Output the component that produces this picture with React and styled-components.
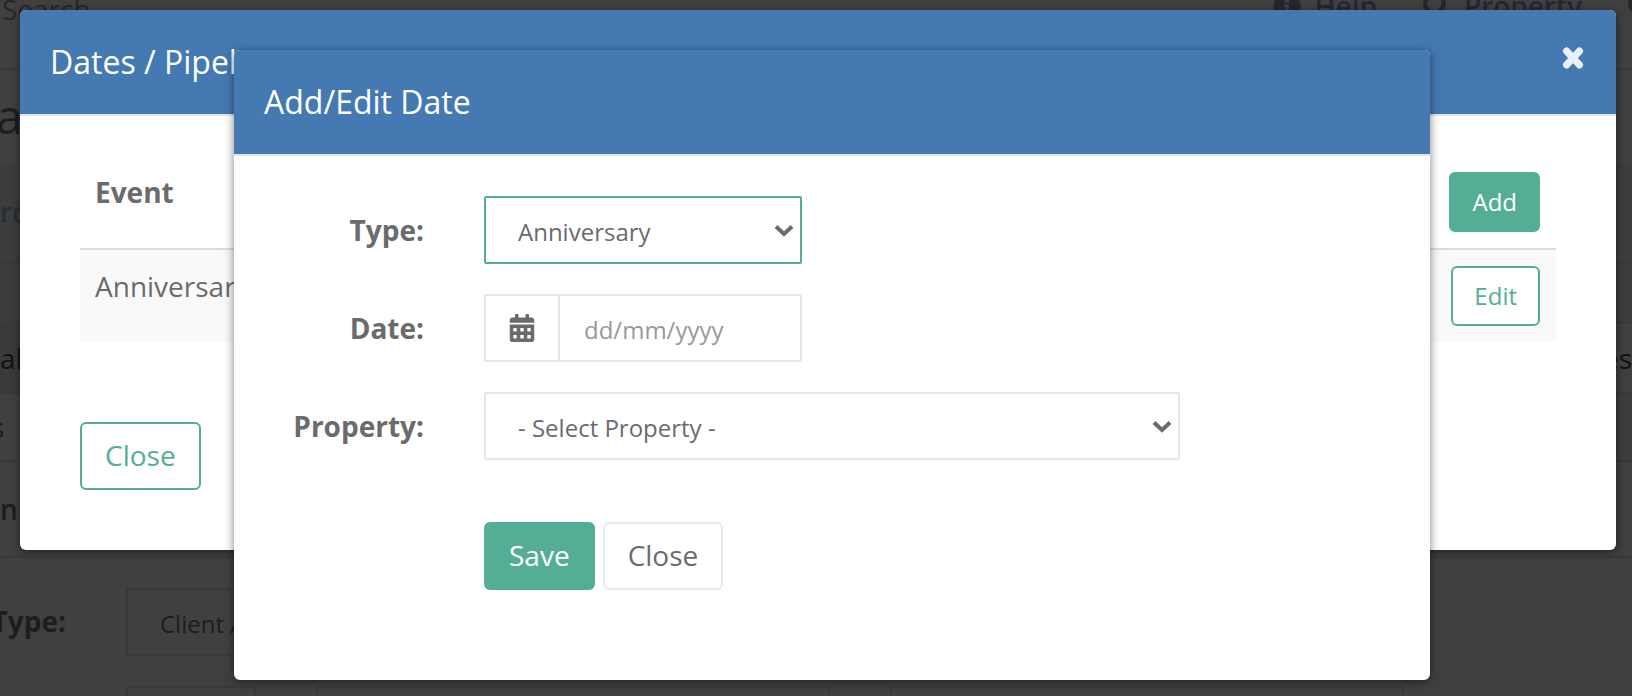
import React from "react";
import styled, { createGlobalStyle } from "styled-components";
import { FaCalendarAlt, FaInfoCircle, FaSearch } from "react-icons/fa";

const GlobalStyle = createGlobalStyle`
  * {
    box-sizing: border-box;
  }
  body {
    margin: 0;
    background: #404040;
    color: #6a6b6d;
    font-family: "Open Sans", "Noto Sans", sans-serif;
    font-size: 28px;
    line-height: 40px;
  }
  button,
  input,
  select {
    font-family: inherit;
    color: inherit;
  }
`;

const Screen = styled.div`
  position: relative;
  height: 100vh;
  min-height: 696px;
  overflow: hidden;
`;

/* page that sits dimmed behind the dialogs */
const Page = styled.div`
  display: flex;
  flex-direction: column;
  color: #1c1e1e;
`;

const TopBar = styled.div`
  display: flex;
  justify-content: space-between;
  height: 70px;
  border-bottom: 2px solid #393939;
  overflow: hidden;
`;

const SearchLabel = styled.span`
  margin: -11px 0 0 2px;
  color: #252728;
`;

const TopLinks = styled.nav`
  display: flex;
  flex: none;
  gap: 46px;
  margin: -14px -24px 0 0;
`;

const TopLink = styled.a`
  display: flex;
  align-items: center;
  gap: 13px;
  height: 40px;
  color: #25272c;
  font-weight: 600;
  text-decoration: none;
`;

const PageTitle = styled.h1`
  height: 92px;
  margin: 0 0 0 -4px;
  font-size: 48px;
  font-weight: 400;
  line-height: 92px;
`;

const Band = styled.div`
  display: flex;
  justify-content: space-between;
  align-items: center;
  height: ${({ $height }) => $height}px;
  background: ${({ $tint }) => $tint || "transparent"};
  border-bottom: 2px solid #393939;
  color: ${({ $color }) => $color || "inherit"};
  font-weight: ${({ $bold }) => ($bold ? 600 : 400)};
  text-indent: ${({ $indent }) => $indent || 0}px;
  overflow: hidden;
`;

const PageForm = styled.div`
  display: grid;
  grid-template-columns: 66px 1fr;
  column-gap: 60px;
  row-gap: 30px;
  padding-top: 30px;
`;

const PageLabel = styled.label`
  justify-self: end;
  font-weight: 700;
  line-height: 66px;
`;

const PageInput = styled.input`
  width: ${({ $width }) => $width}px;
  height: 68px;
  padding: 2px 32px 0;
  background: transparent;
  border: 2px solid #393939;
  font-size: 24px;
`;

const PageFields = styled.div`
  display: flex;
  gap: 60px;
`;

const Dialog = styled.section`
  position: absolute;
  top: ${({ $top }) => $top}px;
  left: ${({ $left }) => $left}px;
  right: ${({ $right }) => $right}px;
  background: #fff;
  border-radius: 6px;
  box-shadow: 0 2px 10px rgba(0, 0, 0, 0.5);
`;

const DialogHeader = styled.header`
  display: flex;
  justify-content: space-between;
  height: 106px;
  padding: 30px;
  background: #4479b2;
  border-bottom: 2px solid #e5e5e5;
  border-radius: 6px 6px 0 0;
  color: #fff;
`;

const DialogTitle = styled.h2`
  margin: 0;
  font-size: 32px;
  font-weight: 400;
  line-height: 44px;
`;

const CloseIcon = styled.button`
  display: flex;
  align-items: center;
  height: 36px;
  padding: 0;
  background: none;
  border: 0;
  color: #ebf0f8;
`;

const DialogBody = styled.div`
  padding: 40px 60px 60px;
`;

const Button = styled.button`
  height: ${({ $small }) => ($small ? 60 : 68)}px;
  padding: ${({ $small }) => ($small ? "0 21px 2px" : "0 23px 2px")};
  background: ${({ $primary }) => ($primary ? "#54ae95" : "#fff")};
  border: 2px solid ${({ $plain }) => ($plain ? "#e9e9e9" : "#54ae95")};
  border-radius: 6px;
  color: ${({ $primary, $plain }) =>
    $primary ? "#fff" : $plain ? "#6a6b6d" : "#54ae95"};
  font-size: ${({ $small }) => ($small ? 24 : 28)}px;
`;

const EventTable = styled.table`
  width: 100%;
  margin-bottom: 80px;
  border-collapse: collapse;
  th,
  td {
    padding: 16px 16px 16px 15px;
    text-align: left;
    vertical-align: top;
  }
  th {
    border-bottom: 2px solid #dcdcdc;
  }
  td {
    background: #f9f9f9;
  }
  th:last-child,
  td:last-child {
    text-align: right;
  }
  button {
    display: inline-block;
    vertical-align: top;
  }
`;

const DateForm = styled.form`
  display: grid;
  grid-template-columns: 190px 1fr;
  column-gap: 60px;
  row-gap: 30px;
  padding: 40px 250px 90px 0;
`;

const Label = styled.label`
  justify-self: end;
  font-weight: 700;
  line-height: 68px;
`;

const Select = styled.select`
  width: ${({ $wide }) => ($wide ? "100%" : "318px")};
  height: 68px;
  padding: 2px 32px 0;
  appearance: none;
  background: #fff;
  border: 2px solid ${({ $active }) => ($active ? "#54ae95" : "#e5e5e5")};
  border-radius: 2px;
  font-size: 24px;
  outline: none;
`;

const SelectBox = styled.div`
  position: relative;
  justify-self: ${({ $wide }) => ($wide ? "stretch" : "start")};
  height: 68px;
`;

const Chevron = styled.svg`
  position: absolute;
  right: 8px;
  top: 28px;
  pointer-events: none;
`;

const InputGroup = styled.div`
  display: flex;
  width: 318px;
  height: 68px;
  border: 2px solid #e5e5e5;
  border-radius: 2px;
`;

const Addon = styled.span`
  display: flex;
  flex: none;
  align-items: center;
  justify-content: center;
  width: 74px;
  border-right: 2px solid #e5e5e5;
`;

const DateInput = styled.input`
  flex: 1;
  min-width: 0;
  padding: 2px 24px 0;
  background: none;
  border: 0;
  font-size: 24px;
  outline: none;
  &::placeholder {
    color: #999;
  }
`;

const Actions = styled.div`
  display: flex;
  grid-column: 2;
  gap: 8px;
  margin-top: 32px;
`;

const SelectField = ({ id, wide, active, children }) => (
  <SelectBox $wide={wide}>
    <Select id={id} $wide={wide} $active={active}>
      {children}
    </Select>
    <Chevron width="20" height="13" viewBox="0 0 20 13">
      <path d="M2 2.5 L10 10 L18 2.5" fill="none" stroke="#6a6b6d" strokeWidth="4" />
    </Chevron>
  </SelectBox>
);

const BackgroundPage = () => (
  <Page>
    <TopBar>
      <SearchLabel>Search</SearchLabel>
      <TopLinks>
        <TopLink href="#help">
          <FaInfoCircle /> Help
        </TopLink>
        <TopLink href="#property">
          <FaSearch /> Property
        </TopLink>
        <TopLink href="#search" aria-label="Search">
          <FaSearch />
        </TopLink>
      </TopLinks>
    </TopBar>
    <PageTitle>a</PageTitle>
    <Band $height={102} $tint="#3c3d3f" $color="#2a2e32" $bold>rc</Band>
    <Band $height={60} $tint="#3c3d3f" />
    <Band
      $height={70}
      $tint="linear-gradient(90deg, #3a3a3a 50%, #404040 50%)"
      $color="#111"
    >
      <span>al</span>
      <span>es</span>
    </Band>
    <Band
      $height={68}
      $tint="linear-gradient(90deg, #404040 50%, #3c3d3f 50%)"
      $indent={-9}
    >
      s
    </Band>
    <Band $height={96} $bold>n</Band>
    <PageForm>
      <PageLabel htmlFor="clientType">Type:</PageLabel>
      <PageInput id="clientType" $width={318} defaultValue="Client A" />
      <span />
      <PageFields>
        <PageInput aria-label="Title" $width={130} />
        <PageInput aria-label="First name" $width={514} />
        <PageInput aria-label="Last name" $width={514} />
      </PageFields>
    </PageForm>
  </Page>
);

const DatesDialog = () => (
  <Dialog $top={10} $left={20} $right={16}>
    <DialogHeader>
      <DialogTitle>Dates / Pipeline</DialogTitle>
      <CloseIcon type="button" aria-label="Close">
        <svg width="26" height="26" viewBox="0 0 26 26">
          <path
            d="M6.5 6 L19.5 20 M19.5 6 L6.5 20"
            stroke="currentColor"
            strokeWidth="7"
            strokeLinecap="round"
          />
        </svg>
      </CloseIcon>
    </DialogHeader>
    <DialogBody>
      <EventTable>
        <thead>
          <tr>
            <th>Event</th>
            <th>
              <Button type="button" $small $primary>Add</Button>
            </th>
          </tr>
        </thead>
        <tbody>
          <tr>
            <td>Anniversary</td>
            <td>
              <Button type="button" $small>Edit</Button>
            </td>
          </tr>
        </tbody>
      </EventTable>
      <Button type="button">Close</Button>
    </DialogBody>
  </Dialog>
);

const EditDateDialog = () => (
  <Dialog $top={50} $left={234} $right={202}>
    <DialogHeader>
      <DialogTitle>Add/Edit Date</DialogTitle>
    </DialogHeader>
    <DateForm>
      <Label htmlFor="type">Type:</Label>
      <SelectField id="type" active>
        <option>Anniversary</option>
      </SelectField>
      <Label htmlFor="date">Date:</Label>
      <InputGroup>
        <Addon>
          <FaCalendarAlt />
        </Addon>
        <DateInput id="date" placeholder="dd/mm/yyyy" />
      </InputGroup>
      <Label htmlFor="property">Property:</Label>
      <SelectField id="property" wide>
        <option>- Select Property -</option>
      </SelectField>
      <Actions>
        <Button type="button" $primary>Save</Button>
        <Button type="button" $plain>Close</Button>
      </Actions>
    </DateForm>
  </Dialog>
);

const App = () => {
  return (
    <Screen>
      <GlobalStyle />
      <BackgroundPage />
      <DatesDialog />
      <EditDateDialog />
    </Screen>
  );
};

export default App;
